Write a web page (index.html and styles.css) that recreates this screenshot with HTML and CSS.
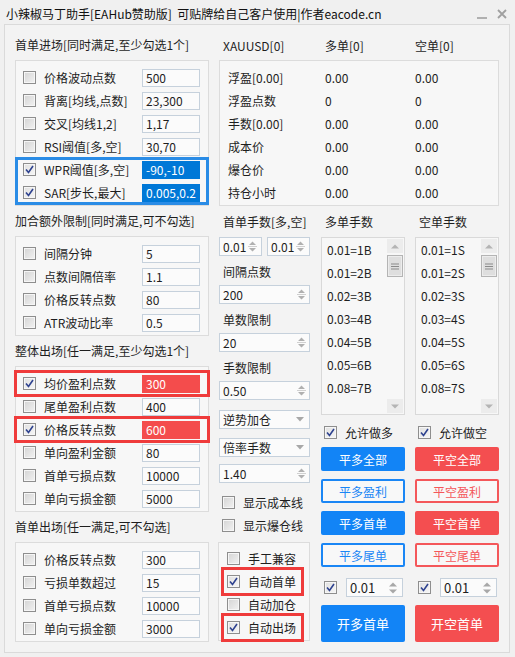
FILE: index.html
```html
<!DOCTYPE html>
<html lang="zh-CN">
<head>
<meta charset="utf-8">
<title>小辣椒马丁助手</title>
<link rel="stylesheet" href="styles.css">
</head>
<body>
<div class="titlebar">
  <span class="title">小辣椒马丁助手[EAHub赞助版]  可贴牌给自己客户使用|作者eacode.cn</span>
  <span class="winbtns">
    <svg class="wmin" width="10" height="6" viewBox="0 0 10 6"><path d="M0 5 H10" stroke="#a0a0a0" stroke-width="1.6"/></svg>
    <svg class="wclose" width="10" height="10" viewBox="0 0 10 10"><path d="M1 1 L9 9 M9 1 L1 9" stroke="#a0a0a0" stroke-width="1.8"/></svg>
  </span>
</div>

<div class="panel">
  <div class="leftcol">
    <div class="sechead">首单进场[同时满足,至少勾选1个]</div>
    <div class="group g6">
      <div class="row"><span class="cb"></span><span class="lbl">价格波动点数</span><span class="inp">500</span></div>
      <div class="row"><span class="cb"></span><span class="lbl">背离[均线,点数]</span><span class="inp">23,300</span></div>
      <div class="row"><span class="cb"></span><span class="lbl">交叉[均线1,2]</span><span class="inp">1,17</span></div>
      <div class="row"><span class="cb"></span><span class="lbl">RSI阈值[多,空]</span><span class="inp">30,70</span></div>
      <div class="hl-blue">
        <div class="row"><span class="cb on"><svg viewBox="0 0 11 11"><path d="M2 5.5 L4.5 8.5 L9 2" /></svg></span><span class="lbl">WPR阈值[多,空]</span><span class="inp sel">-90,-10</span></div>
        <div class="row"><span class="cb on"><svg viewBox="0 0 11 11"><path d="M2 5.5 L4.5 8.5 L9 2" /></svg></span><span class="lbl">SAR[步长,最大]</span><span class="inp sel">0.005,0.2</span></div>
      </div>
    </div>

    <div class="sechead">加合额外限制[同时满足,可不勾选]</div>
    <div class="group">
      <div class="row"><span class="cb"></span><span class="lbl">间隔分钟</span><span class="inp">5</span></div>
      <div class="row"><span class="cb"></span><span class="lbl">点数间隔倍率</span><span class="inp">1.1</span></div>
      <div class="row"><span class="cb"></span><span class="lbl">价格反转点数</span><span class="inp">80</span></div>
      <div class="row"><span class="cb"></span><span class="lbl">ATR波动比率</span><span class="inp">0.5</span></div>
    </div>

    <div class="sechead">整体出场[任一满足,至少勾选1个]</div>
    <div class="group">
      <div class="row hl-red"><span class="cb on"><svg viewBox="0 0 11 11"><path d="M2 5.5 L4.5 8.5 L9 2" /></svg></span><span class="lbl">均价盈利点数</span><span class="inp red">300</span></div>
      <div class="row"><span class="cb"></span><span class="lbl">尾单盈利点数</span><span class="inp">400</span></div>
      <div class="row hl-red"><span class="cb on"><svg viewBox="0 0 11 11"><path d="M2 5.5 L4.5 8.5 L9 2" /></svg></span><span class="lbl">价格反转点数</span><span class="inp red">600</span></div>
      <div class="row"><span class="cb"></span><span class="lbl">单向盈利金额</span><span class="inp">80</span></div>
      <div class="row"><span class="cb"></span><span class="lbl">首单亏损点数</span><span class="inp">10000</span></div>
      <div class="row"><span class="cb"></span><span class="lbl">单向亏损金额</span><span class="inp">5000</span></div>
    </div>

    <div class="sechead">首单出场[任一满足,可不勾选]</div>
    <div class="group">
      <div class="row"><span class="cb"></span><span class="lbl">价格反转点数</span><span class="inp">300</span></div>
      <div class="row"><span class="cb"></span><span class="lbl">亏损单数超过</span><span class="inp">15</span></div>
      <div class="row"><span class="cb"></span><span class="lbl">首单亏损点数</span><span class="inp">10000</span></div>
      <div class="row"><span class="cb"></span><span class="lbl">单向亏损金额</span><span class="inp">3000</span></div>
    </div>
  </div>

  <div class="rightarea">
    <div class="infohead"><span class="ic1">XAUUSD[0]</span><span class="ic2">多单[0]</span><span>空单[0]</span></div>
    <div class="infobox">
      <div class="irow"><span class="ic1">浮盈[0.00]</span><span class="ic2">0.00</span><span>0.00</span></div>
      <div class="irow"><span class="ic1">浮盈点数</span><span class="ic2">0</span><span>0</span></div>
      <div class="irow"><span class="ic1">手数[0.00]</span><span class="ic2">0.00</span><span>0.00</span></div>
      <div class="irow"><span class="ic1">成本价</span><span class="ic2">0.00</span><span>0.00</span></div>
      <div class="irow"><span class="ic1">爆仓价</span><span class="ic2">0.00</span><span>0.00</span></div>
      <div class="irow"><span class="ic1">持仓小时</span><span class="ic2">0.00</span><span>0.00</span></div>
    </div>

    <div class="lower">
      <div class="midcol">
        <div class="mlabel m1">首单手数[多,空]</div>
        <div class="spinpair s1">
          <div class="spin small"><span>0.01</span><svg class="arr" width="9" height="13" viewBox="0 0 9 13"><path d="M1 5 L4.5 1.5 L8 5 Z M1 8 L4.5 11.5 L8 8 Z" fill="#b0b0b0"/><path d="M0 6.5 H9" stroke="#d0d0d0"/></svg></div>
          <div class="spin small"><span>0.01</span><svg class="arr" width="9" height="13" viewBox="0 0 9 13"><path d="M1 5 L4.5 1.5 L8 5 Z M1 8 L4.5 11.5 L8 8 Z" fill="#b0b0b0"/><path d="M0 6.5 H9" stroke="#d0d0d0"/></svg></div>
        </div>
        <div class="mlabel">间隔点数</div>
        <div class="spin s2"><span>200</span><svg class="arr" width="9" height="13" viewBox="0 0 9 13"><path d="M1 5 L4.5 1.5 L8 5 Z M1 8 L4.5 11.5 L8 8 Z" fill="#b0b0b0"/><path d="M0 6.5 H9" stroke="#d0d0d0"/></svg></div>
        <div class="mlabel">单数限制</div>
        <div class="spin s2"><span>20</span><svg class="arr" width="9" height="13" viewBox="0 0 9 13"><path d="M1 5 L4.5 1.5 L8 5 Z M1 8 L4.5 11.5 L8 8 Z" fill="#b0b0b0"/><path d="M0 6.5 H9" stroke="#d0d0d0"/></svg></div>
        <div class="mlabel">手数限制</div>
        <div class="spin s2"><span>0.50</span><svg class="arr" width="9" height="13" viewBox="0 0 9 13"><path d="M1 5 L4.5 1.5 L8 5 Z M1 8 L4.5 11.5 L8 8 Z" fill="#b0b0b0"/><path d="M0 6.5 H9" stroke="#d0d0d0"/></svg></div>
        <div class="spin combo c1"><span>逆势加仓</span><svg class="carr" width="8" height="5" viewBox="0 0 8 5"><path d="M0 0 H8 L4 4.5 Z" fill="#a8a8a8"/></svg></div>
        <div class="spin combo c2"><span>倍率手数</span><svg class="carr" width="8" height="5" viewBox="0 0 8 5"><path d="M0 0 H8 L4 4.5 Z" fill="#a8a8a8"/></svg></div>
        <div class="spin s5"><span>1.40</span><svg class="arr" width="9" height="13" viewBox="0 0 9 13"><path d="M1 5 L4.5 1.5 L8 5 Z M1 8 L4.5 11.5 L8 8 Z" fill="#b0b0b0"/><path d="M0 6.5 H9" stroke="#d0d0d0"/></svg></div>
        <div class="mrow r1"><span class="cb"></span><span class="lbl">显示成本线</span></div>
        <div class="mrow r2"><span class="cb"></span><span class="lbl">显示爆仓线</span></div>
        <div class="mgroup">
          <div class="mgrow"><span class="cb"></span><span class="lbl">手工兼容</span></div>
          <div class="mgrow hl-red2"><span class="cb on"><svg viewBox="0 0 11 11"><path d="M2 5.5 L4.5 8.5 L9 2" /></svg></span><span class="lbl">自动首单</span></div>
          <div class="mgrow"><span class="cb"></span><span class="lbl">自动加仓</span></div>
          <div class="mgrow hl-red2"><span class="cb on"><svg viewBox="0 0 11 11"><path d="M2 5.5 L4.5 8.5 L9 2" /></svg></span><span class="lbl">自动出场</span></div>
        </div>
      </div>

      <div class="lotcol">
        <div class="lothead">多单手数</div>
        <div class="list">
          <div class="items">
            <div>0.01=1B</div><div>0.01=2B</div><div>0.02=3B</div><div>0.03=4B</div><div>0.04=5B</div><div>0.05=6B</div><div>0.08=7B</div>
          </div>
          <div class="sbar">
            <div class="sbtn"><svg width="8" height="5" viewBox="0 0 8 5"><path d="M0 4.5 H8 L4 0.5 Z" fill="#b4b4b4"/></svg></div>
            <div class="thumb"><svg width="8" height="7" viewBox="0 0 8 7"><path d="M0 1 H8 M0 3.5 H8 M0 6 H8" stroke="#8a8a8a"/></svg></div>
            <div class="sfill"></div>
            <div class="sbtn"><svg width="8" height="5" viewBox="0 0 8 5"><path d="M0 0.5 H8 L4 4.5 Z" fill="#b4b4b4"/></svg></div>
          </div>
        </div>
        <div class="allow"><span class="cb on"><svg viewBox="0 0 11 11"><path d="M2 5.5 L4.5 8.5 L9 2" /></svg></span><span class="lbl">允许做多</span></div>
        <div class="btn blue b1">平多全部</div>
        <div class="btn oblue">平多盈利</div>
        <div class="btn blue">平多首单</div>
        <div class="btn oblue">平多尾单</div>
        <div class="qty"><span class="cb on"><svg viewBox="0 0 11 11"><path d="M2 5.5 L4.5 8.5 L9 2" /></svg></span><div class="spin qspin"><span>0.01</span><svg class="arr" width="10" height="14" viewBox="0 0 10 14"><path d="M1 5.5 L5 1.5 L9 5.5 Z M1 8.5 L5 12.5 L9 8.5 Z" fill="#a8a8a8"/></svg></div></div>
        <div class="btn blue big">开多首单</div>
      </div>

      <div class="lotcol">
        <div class="lothead">空单手数</div>
        <div class="list">
          <div class="items">
            <div>0.01=1S</div><div>0.01=2S</div><div>0.02=3S</div><div>0.03=4S</div><div>0.04=5S</div><div>0.05=6S</div><div>0.08=7S</div>
          </div>
          <div class="sbar">
            <div class="sbtn"><svg width="8" height="5" viewBox="0 0 8 5"><path d="M0 4.5 H8 L4 0.5 Z" fill="#b4b4b4"/></svg></div>
            <div class="thumb"><svg width="8" height="7" viewBox="0 0 8 7"><path d="M0 1 H8 M0 3.5 H8 M0 6 H8" stroke="#8a8a8a"/></svg></div>
            <div class="sfill"></div>
            <div class="sbtn"><svg width="8" height="5" viewBox="0 0 8 5"><path d="M0 0.5 H8 L4 4.5 Z" fill="#b4b4b4"/></svg></div>
          </div>
        </div>
        <div class="allow"><span class="cb on"><svg viewBox="0 0 11 11"><path d="M2 5.5 L4.5 8.5 L9 2" /></svg></span><span class="lbl">允许做空</span></div>
        <div class="btn red b1">平空全部</div>
        <div class="btn ored">平空盈利</div>
        <div class="btn red">平空首单</div>
        <div class="btn ored">平空尾单</div>
        <div class="qty"><span class="cb on"><svg viewBox="0 0 11 11"><path d="M2 5.5 L4.5 8.5 L9 2" /></svg></span><div class="spin qspin"><span>0.01</span><svg class="arr" width="10" height="14" viewBox="0 0 10 14"><path d="M1 5.5 L5 1.5 L9 5.5 Z M1 8.5 L5 12.5 L9 8.5 Z" fill="#a8a8a8"/></svg></div></div>
        <div class="btn red big">开空首单</div>
      </div>
    </div>
  </div>
</div>
</body>
</html>
```
FILE: styles.css
```css
* { box-sizing: border-box; }
html, body { margin: 0; padding: 0; }
body {
  width: 515px;
  height: 657px;
  overflow: hidden;
  background: #f0f0f0;
  font-family: "Noto Sans CJK SC", "Microsoft YaHei", sans-serif;
  font-size: 12px;
  color: #1e1e1e;
}

/* title bar */
.titlebar {
  height: 24px;
  display: flex;
  align-items: center;
  padding: 3px 8px 0 6px;
}
.title { white-space: pre; color: #111; }
.winbtns { margin-left: auto; display: flex; align-items: center; gap: 10px; }
.wmin { margin-top: 4px; }

/* main panel */
.panel {
  margin-left: 4px;
  width: 506px;
  height: 629px;
  border: 1px solid #dadada;
  background: #f3f3f3;
  display: flex;
  padding: 5px 0 0 10px;
  gap: 10px;
}

.leftcol { width: 194px; flex: none; }
.sechead { height: 30px; line-height: 30px; white-space: nowrap; }

.group {
  border: 1px solid #dcdcdc;
  background: #f7f7f7;
  padding: 5px 0 1px;
}
.row {
  display: flex;
  align-items: center;
  height: 23px;
  padding-left: 7px;
}
.lbl { margin-left: 8px; white-space: nowrap; }
.inp {
  margin-left: auto;
  margin-right: 8px;
  width: 58px;
  height: 18px;
  border: 1px solid #c6d1dc;
  background: #fbfbfb;
  padding-left: 3px;
  line-height: 16px;
  white-space: nowrap;
  overflow: hidden;
}
.inp.sel { background: #0078d7; border-color: #0078d7; color: #fff; }
.inp.red { background: #f44c4c; border-color: #f44c4c; color: #fff; }

.hl-blue { outline: 3px solid #2a8ce6; outline-offset: -2px; }
.hl-red { outline: 3px solid #ef3b3b; outline-offset: -1px; }
.hl-red2 { outline: 3px solid #ef3b3b; outline-offset: 0; }

/* checkbox */
.cb {
  flex: none;
  width: 13px;
  height: 13px;
  border: 1px solid #8e8e8e;
  background: linear-gradient(135deg, #d4d4d4, #f2f2f2);
  box-shadow: inset 0 0 0 1px #f6f6f6;
  display: flex;
  align-items: center;
  justify-content: center;
}
.cb.on { background: linear-gradient(135deg, #e0e0e0, #f6f6f6); }
.cb svg { width: 11px; height: 11px; }
.cb svg path { fill: none; stroke: #2e428f; stroke-width: 1.6; }

/* right area */
.rightarea { width: 280px; flex: none; }
.infohead { height: 30px; display: flex; align-items: center; }
.infohead .ic1 { width: 106px; padding-left: 4px; }
.ic2 { width: 90px; }
.infobox {
  border: 1px solid #dcdcdc;
  background: #f7f7f7;
  padding: 5px 0 1px;
}
.irow { display: flex; align-items: center; height: 23px; padding-left: 8px; }
.irow .ic1 { width: 97px; }

.lower { display: flex; }

/* middle column */
.midcol { width: 91px; flex: none; }
.mlabel { height: 18px; line-height: 18px; padding-left: 4px; margin-top: 7px; white-space: nowrap; }
.m1 { margin-top: 7px; }
.spin {
  height: 19px;
  border: 1px solid #c6d1dc;
  background: #fbfbfb;
  display: flex;
  align-items: center;
  padding: 0 3px 0 3px;
  line-height: 17px;
}
.spin .arr, .spin .carr { margin-left: auto; flex: none; }
.spinpair { display: flex; gap: 5px; margin-top: 6px; }
.spin.small { width: 43px; padding-right: 4px; }
.s2 { margin-top: 4px; }
.combo { padding-right: 5px; }
.c1 { margin-top: 10px; }
.c2 { margin-top: 9px; }
.s5 { margin-top: 7px; }
.mrow { display: flex; align-items: center; height: 18px; padding-left: 3px; }
.r1 { margin-top: 10px; }
.r2 { margin-top: 5px; }
.mgroup {
  margin-top: 8px;
  margin-left: -1px;
  border: 1px solid #dcdcdc;
  background: #f7f7f7;
  padding: 4px 0 1px;
}
.mgrow {
  display: flex;
  align-items: center;
  height: 23px;
  width: 77px;
  margin-left: 5px;
  padding-left: 3px;
}

/* lot columns */
.lotcol { width: 84px; flex: none; margin-left: 11px; }
.lotcol + .lotcol { margin-left: 10px; }
.lothead { margin-top: 7px; height: 18px; line-height: 18px; padding-left: 4px; }
.list {
  margin-top: 6px;
  height: 178px;
  border: 1px solid #d9d9d9;
  background: #f7f7f7;
  display: flex;
}
.items { flex: 1; padding-left: 5px; }
.items div { height: 23px; line-height: 23px; white-space: nowrap; }
.sbar {
  width: 16px;
  margin: 1px 1px 1px 0;
  display: flex;
  flex-direction: column;
}
.sbtn {
  height: 14px;
  background: #ececec;
  display: flex;
  align-items: center;
  justify-content: center;
}
.thumb {
  margin-top: 2px;
  height: 22px;
  border: 1px solid #b4b4b4;
  background: #dedede;
  box-shadow: inset 0 0 0 1px #ececec;
  display: flex;
  align-items: center;
  justify-content: center;
}
.sfill { flex: 1; }

.allow { margin-top: 8px; height: 18px; display: flex; align-items: center; padding-left: 3px; }

.btn {
  margin-top: 8px;
  height: 24px;
  display: flex;
  align-items: center;
  justify-content: center;
  border-radius: 2px;
  color: #fff;
  white-space: nowrap;
}
.btn.b1 { margin-top: 6px; }
.btn.blue { background: #1284f6; }
.btn.red { background: #f44e50; }
.btn.oblue { background: #f8f8f8; border: 2px solid #1a86f5; color: #1a86f5; }
.btn.ored { background: #f8f8f8; border: 2px solid #f4575a; color: #f4575a; }
.btn.big { margin-top: 8px; height: 37px; font-size: 13px; }

.qty { margin-top: 11px; height: 19px; display: flex; align-items: center; padding-left: 3px; }
.qspin { margin-left: 9px; width: 57px; padding-right: 4px; font-size: 13px; }
```
